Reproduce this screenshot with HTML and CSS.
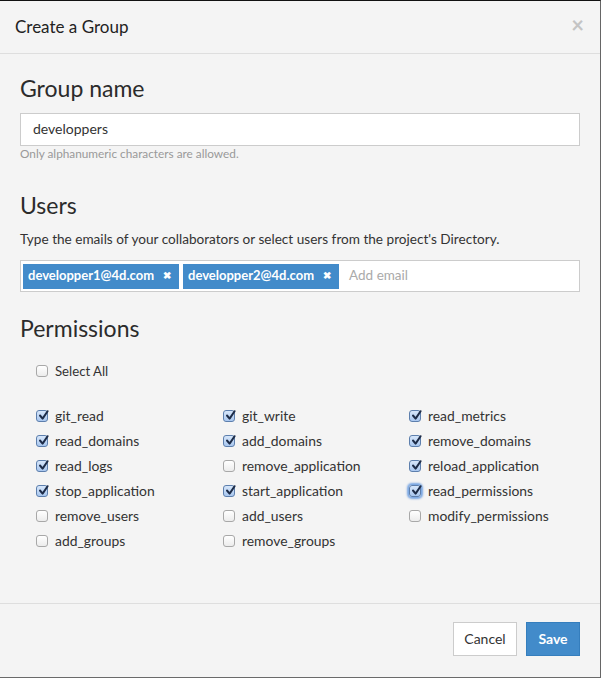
FILE: index.html
```html
<!DOCTYPE html>
<html>
<head>
<meta charset="utf-8">
<link rel="stylesheet" href="styles.css">
</head>
<body>
<div class="modal">
  <div class="modal-header">
    <h1 class="modal-title">Create a Group</h1>
    <span class="close">×</span>
  </div>
  <div class="modal-body">
    <h2 class="section-title first">Group name</h2>
    <div class="text-input">developpers</div>
    <p class="help">Only alphanumeric characters are allowed.</p>

    <h2 class="section-title users">Users</h2>
    <p class="desc">Type the emails of your collaborators or select users from the project's Directory.</p>
    <div class="tag-input">
      <span class="tag">developper1@4d.com <span class="tag-x">✖</span></span>
      <span class="tag">developper2@4d.com <span class="tag-x">✖</span></span>
      <span class="placeholder">Add email</span>
    </div>

    <h2 class="section-title perms">Permissions</h2>
    <div class="select-all">
      <label class="check"><span class="cb"></span>Select All</label>
    </div>
    <div class="perm-grid">
      <label class="check"><span class="cb on"><svg viewBox="0 0 13 13"><path d="M3 6.5 L5.6 9.6 L10.6 2.2" /></svg></span>git_read</label>
      <label class="check"><span class="cb on"><svg viewBox="0 0 13 13"><path d="M3 6.5 L5.6 9.6 L10.6 2.2" /></svg></span>git_write</label>
      <label class="check"><span class="cb on"><svg viewBox="0 0 13 13"><path d="M3 6.5 L5.6 9.6 L10.6 2.2" /></svg></span>read_metrics</label>

      <label class="check"><span class="cb on"><svg viewBox="0 0 13 13"><path d="M3 6.5 L5.6 9.6 L10.6 2.2" /></svg></span>read_domains</label>
      <label class="check"><span class="cb on"><svg viewBox="0 0 13 13"><path d="M3 6.5 L5.6 9.6 L10.6 2.2" /></svg></span>add_domains</label>
      <label class="check"><span class="cb on"><svg viewBox="0 0 13 13"><path d="M3 6.5 L5.6 9.6 L10.6 2.2" /></svg></span>remove_domains</label>

      <label class="check"><span class="cb on"><svg viewBox="0 0 13 13"><path d="M3 6.5 L5.6 9.6 L10.6 2.2" /></svg></span>read_logs</label>
      <label class="check"><span class="cb"></span>remove_application</label>
      <label class="check"><span class="cb on"><svg viewBox="0 0 13 13"><path d="M3 6.5 L5.6 9.6 L10.6 2.2" /></svg></span>reload_application</label>

      <label class="check"><span class="cb on"><svg viewBox="0 0 13 13"><path d="M3 6.5 L5.6 9.6 L10.6 2.2" /></svg></span>stop_application</label>
      <label class="check"><span class="cb on"><svg viewBox="0 0 13 13"><path d="M3 6.5 L5.6 9.6 L10.6 2.2" /></svg></span>start_application</label>
      <label class="check"><span class="cb on focus"><svg viewBox="0 0 13 13"><path d="M3 6.5 L5.6 9.6 L10.6 2.2" /></svg></span>read_permissions</label>

      <label class="check"><span class="cb"></span>remove_users</label>
      <label class="check"><span class="cb"></span>add_users</label>
      <label class="check"><span class="cb"></span>modify_permissions</label>

      <label class="check"><span class="cb"></span>add_groups</label>
      <label class="check"><span class="cb"></span>remove_groups</label>
    </div>
  </div>
  <div class="modal-footer">
    <button class="btn btn-default">Cancel</button>
    <button class="btn btn-primary">Save</button>
  </div>
</div>
</body>
</html>
```
FILE: styles.css
```css
* { box-sizing: border-box; }
html, body { margin: 0; padding: 0; }
body {
  font-family: Lato, "Open Sans", "Liberation Sans", sans-serif;
  color: #333;
  background: #f4f4f4;
}
.modal {
  width: 601px;
  height: 678px;
  background: #f4f4f4;
  border-top: 1px solid #111;
  border-right: 1px solid #666;
  border-bottom: 1px solid #6a6a6a;
  display: flex;
  flex-direction: column;
}
.modal-header {
  height: 53px;
  border-bottom: 1px solid #dedede;
  display: flex;
  align-items: center;
  justify-content: space-between;
  padding: 0 16px 0 15px;
}
.modal-title {
  margin: 0;
  font-size: 17px;
  font-weight: normal;
  color: #222;
  line-height: 20px;
  padding-bottom: 1px;
}
.close {
  font-size: 22px;
  font-weight: bold;
  color: #c4c4c4;
  line-height: 20px;
  padding-bottom: 4px;
}
.modal-body {
  padding: 0 20px;
  flex: 1;
}
.section-title {
  margin: 0;
  font-size: 23px;
  font-weight: normal;
  line-height: 30px;
  color: #2b2b2b;
}
.section-title.first { margin-top: 19px; }
.text-input {
  margin-top: 10px;
  height: 33px;
  background: #fff;
  border: 1px solid #ccc;
  padding: 0 12px;
  font-size: 14px;
  line-height: 30px;
  color: #333;
}
.help {
  margin: 1px 0 0;
  font-size: 11.8px;
  line-height: 14px;
  color: #999;
}
.section-title.users { margin-top: 29px; }
.desc {
  margin: 10px 0 0;
  font-size: 13.6px;
  line-height: 18px;
  color: #333;
}
.tag-input {
  margin-top: 12px;
  height: 32px;
  background: #fff;
  border: 1px solid #ccc;
  padding: 2px;
  display: flex;
  align-items: center;
  gap: 4px;
}
.tag {
  height: 25px;
  background: #428bca;
  color: #fff;
  font-weight: bold;
  font-size: 13px;
  line-height: 25px;
  padding: 0 8px 2px 5px;
  display: flex;
  align-items: center;
  gap: 9px;
  white-space: nowrap;
}
.tag-x { font-size: 10px; }
.placeholder {
  margin-left: 6px;
  font-size: 13.5px;
  color: #aaa;
  padding-bottom: 2px;
}
.section-title.perms { margin-top: 21px; }
.select-all {
  margin-top: 15px;
  padding-left: 16px;
}
.check {
  display: flex;
  align-items: center;
  gap: 7px;
  height: 25px;
  font-size: 13.9px;
  color: #333;
  white-space: nowrap;
}
.select-all .check { font-size: 13.2px; }
.perm-grid {
  margin-top: 20px;
  padding-left: 16px;
  display: grid;
  grid-template-columns: 187px 186px 180px;
}
.cb {
  width: 12px;
  height: 12px;
  border: 1px solid #a8a8a8;
  border-radius: 3px;
  background: linear-gradient(#ffffff, #ececec);
  position: relative;
  flex: none;
}
.cb.on {
  border-color: #5d7fad;
  background: linear-gradient(#d6e6fa, #a9c7ef);
}
.cb svg {
  position: absolute;
  left: 0;
  top: -2px;
  width: 13px;
  height: 13px;
  overflow: visible;
}
.cb svg path {
  fill: none;
  stroke: #1d2c48;
  stroke-width: 2;
  stroke-linecap: round;
  stroke-linejoin: round;
}
.cb.focus {
  box-shadow: 0 0 2px 2px rgba(80, 140, 220, 0.75);
}
.modal-footer {
  height: 74px;
  border-top: 1px solid #dedede;
  display: flex;
  justify-content: flex-end;
  align-items: flex-start;
  padding: 18px 20px 0 0;
  gap: 9px;
}
.btn {
  height: 34px;
  font-family: inherit;
  font-size: 14px;
  padding: 0 0 2px;
  border-radius: 0;
  cursor: pointer;
}
.btn-default {
  width: 64px;
  background: #fff;
  border: 1px solid #ccc;
  color: #333;
}
.btn-primary {
  width: 54px;
  background: #428bca;
  border: 1px solid #357ebd;
  color: #fff;
  font-weight: bold;
}
```
